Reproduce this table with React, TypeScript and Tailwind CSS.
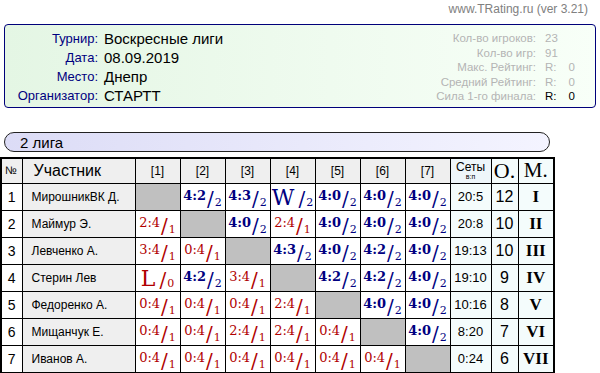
import type { ReactNode } from 'react'

type Row = {
  num: number
  name: string
  cells: (string | null)[]
  sets: string
  points: number
  place: string
}

const rows: Row[] = [
  { num: 1, name: 'МирошникВК Д.', cells: [null, '4:2/2', '4:3/2', 'W/2', '4:0/2', '4:0/2', '4:0/2'], sets: '20:5', points: 12, place: 'I' },
  { num: 2, name: 'Маймур Э.', cells: ['2:4/1', null, '4:0/2', '2:4/1', '4:0/2', '4:0/2', '4:0/2'], sets: '20:8', points: 10, place: 'II' },
  { num: 3, name: 'Левченко А.', cells: ['3:4/1', '0:4/1', null, '4:3/2', '4:0/2', '4:2/2', '4:0/2'], sets: '19:13', points: 10, place: 'III' },
  { num: 4, name: 'Стерин Лев', cells: ['L/0', '4:2/2', '3:4/1', null, '4:2/2', '4:2/2', '4:0/2'], sets: '19:10', points: 9, place: 'IV' },
  { num: 5, name: 'Федоренко А.', cells: ['0:4/1', '0:4/1', '0:4/1', '2:4/1', null, '4:0/2', '4:0/2'], sets: '10:16', points: 8, place: 'V' },
  { num: 6, name: 'Мищанчук Е.', cells: ['0:4/1', '0:4/1', '2:4/1', '2:4/1', '0:4/1', null, '4:0/2'], sets: '8:20', points: 7, place: 'VI' },
  { num: 7, name: 'Иванов А.', cells: ['0:4/1', '0:4/1', '0:4/1', '0:4/1', '0:4/1', '0:4/1', null], sets: '0:24', points: 6, place: 'VII' },
]

const info = [
  ['Турнир:', 'Воскресные лиги'],
  ['Дата:', '08.09.2019'],
  ['Место:', 'Днепр'],
  ['Организатор:', 'СТАРТТ'],
]

const stats: [string, ReactNode, boolean][] = [
  ['Кол-во игроков:', '23', false],
  ['Кол-во игр:', '91', false],
  ['Макс. Рейтинг:', 'R:', false],
  ['Средний Рейтинг:', 'R:', false],
  ['Сила 1-го финала:', 'R:', true],
]

function Score({ value }: { value: string }) {
  const [score, pts] = value.split('/')
  const win = pts === '2'
  const letter = score === 'W' || score === 'L'
  const color = win ? 'text-[#000080]' : 'text-[#b00000]'
  return (
    <div className={`flex h-[26px] items-start justify-center font-['DejaVu_Serif',serif] ${color}`}>
      <span
        className={
          letter
            ? 'mt-[3px] text-[22px] leading-[22px]'
            : `mt-[5px] text-[13px] leading-[13px] ${win ? 'font-bold' : ''}`
        }
      >
        {score}
      </span>
      <span className={`mt-[5px] text-[20px] leading-[20px] ${letter ? 'ml-[4px]' : 'ml-[1px]'}`}>/</span>
      <span className="ml-[1px] mt-[13px] text-[11px] leading-[11px]">{pts}</span>
    </div>
  )
}

export default function App() {
  return (
    <div className="relative h-[373px] w-[600px] overflow-hidden bg-white font-['Liberation_Sans',sans-serif] leading-none text-black">
      <div className="flex h-[24px] justify-end pr-[12px] pt-[3px] text-[12px] text-[#808080]">
        www.TRating.ru (ver 3.21)
      </div>

      <div className="mx-[4px] flex h-[84px] justify-between rounded-[4px] border border-[#00007a] bg-gradient-to-r from-[#e4f6e4] to-[#f8fff8]">
        <div className="grid grid-cols-[93px_1fr] content-start gap-x-[6px] pt-[4px]">
          {info.map(([label, value]) => (
            <div key={label} className="contents">
              <div className="h-[19px] text-right text-[13px] leading-[19px] text-[#000080]">{label}</div>
              <div className="h-[19px] text-[15px] leading-[19px]">{value}</div>
            </div>
          ))}
        </div>
        <div className="grid grid-cols-[auto_50px] content-start gap-x-[9px] pt-[6px] text-[11.5px] leading-[14.5px]">
          {stats.map(([label, value, dark]) => (
            <div key={label} className="contents">
              <div className="text-right text-[#b4b4b4]">{label}</div>
              <div className={`flex ${dark ? 'text-black' : 'text-[#b4b4b4]'}`}>
                <span>{value}</span>
                {value === 'R:' && <span className="ml-[12px]">0</span>}
              </div>
            </div>
          ))}
        </div>
      </div>

      <div className="ml-[4px] mt-[24px] flex h-[20px] w-[546px] items-center rounded-full border border-[#222] bg-gradient-to-r from-[#dcdcf6] to-[#f4f4ff] pl-[15px] text-[15px]">
        2 лига
      </div>

      <table className="mt-[5px] w-[554px] table-fixed border-collapse border-2 border-black leading-none">
        <colgroup>
          <col className="w-[21px]" />
          <col className="w-[113px]" />
          {[0, 1, 2, 3, 4, 5, 6].map((i) => (
            <col key={i} className="w-[45px]" />
          ))}
          <col className="w-[41px]" />
          <col className="w-[27px]" />
          <col className="w-[36px]" />
        </colgroup>
        <thead>
          <tr className="h-[25px] bg-[#efefef]">
            <th className="border border-black px-[3px] text-left text-[11px] font-normal">№</th>
            <th className="border border-black pl-[11px] text-left text-[16px] font-normal">Участник</th>
            {[1, 2, 3, 4, 5, 6, 7].map((i) => (
              <th key={i} className="border border-black text-[12px] font-normal">[{i}]</th>
            ))}
            <th className="border border-black bg-[#eef6fa] text-[12px] font-normal leading-[12px]">
              Сеты
              <div className="text-[7px] leading-[8px]">в:п</div>
            </th>
            <th className="border border-black bg-[#f4fcfc] font-['Liberation_Serif',serif] text-[22px] font-normal">О.</th>
            <th className="border border-black bg-[#f4fcfc] font-['Liberation_Serif',serif] text-[21px] font-normal">М.</th>
          </tr>
        </thead>
        <tbody>
          {rows.map((row) => (
            <tr key={row.num} className="h-[27px]">
              <td className="border border-black text-center text-[14px]">{row.num}</td>
              <td className="border border-black bg-[#efefef] pl-[9px] text-[12px]">{row.name}</td>
              {row.cells.map((cell, i) =>
                cell ? (
                  <td key={i} className="border border-black bg-white p-0">
                    <Score value={cell} />
                  </td>
                ) : (
                  <td key={i} className="border border-black bg-[#c0c0c0]" />
                )
              )}
              <td className="border border-black bg-[#f4fcfc] text-center text-[13px]">{row.sets}</td>
              <td className="border border-black bg-[#f4fcfc] text-center text-[16px]">{row.points}</td>
              <td className="border border-black bg-[#f4fcfc] text-center font-['Liberation_Serif',serif] text-[17px] font-bold">
                {row.place}
              </td>
            </tr>
          ))}
        </tbody>
      </table>
    </div>
  )
}
